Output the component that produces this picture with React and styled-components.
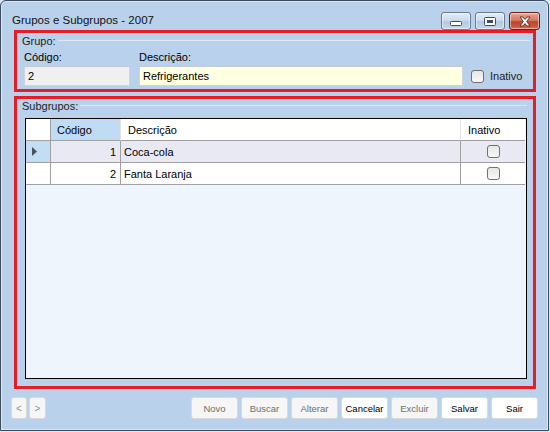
import React from "react"
import styled, { createGlobalStyle } from "styled-components"

const GlobalStyle = createGlobalStyle`
  html, body {
    margin: 0;
    padding: 0;
    background: #dce8f4;
  }
  * {
    box-sizing: border-box;
  }
`

const Window = styled.div`
  width: 549px;
  height: 431px;
  border: 1px solid #3d4b5a;
  border-radius: 6px 6px 0 0;
  background: #b9d1ea;
  box-shadow: inset 0 0 0 1px rgba(255, 255, 255, 0.45);
  display: flex;
  flex-direction: column;
  font-family: "Liberation Sans", Arial, sans-serif;
  font-size: 11px;
  color: #000;
  overflow: hidden;
`

const TitleBar = styled.div`
  height: 29px;
  flex-shrink: 0;
  display: flex;
  align-items: flex-start;
  padding: 0 8px 0 11px;
`

const Title = styled.div`
  flex: 1;
  font-size: 11.5px;
  padding-top: 13px;
  color: #111;
`

const Caption = styled.div`
  display: flex;
  gap: 4px;
  padding-top: 11px;
`

const CaptionButton = styled.div`
  width: ${(p) => (p.$close ? 31 : 30)}px;
  height: 18px;
  border-radius: 3px;
  border: 1px solid ${(p) => (p.$close ? "#5e2118" : "#6a7b90")};
  background: ${(p) =>
    p.$close
      ? "linear-gradient(#e7a595 0%, #d77a62 45%, #c0422a 55%, #d0664b 100%)"
      : "linear-gradient(#e4edf7 0%, #cddcee 45%, #b4c9e2 55%, #c6d8ec 100%)"};
  box-shadow: inset 0 0 0 1px rgba(255, 255, 255, 0.5);
  display: flex;
  align-items: center;
  justify-content: center;
`

const Main = styled.div`
  flex-shrink: 0;
  display: flex;
  flex-direction: column;
  padding: 0 12px 0 13px;
`

const RedBox = styled.div`
  border: 3px solid #e41e26;
  height: ${(p) => p.$h}px;
  margin-top: ${(p) => p.$mt || 0}px;
  display: flex;
  flex-direction: column;
`

const GroupBox = styled.div`
  flex: 1;
  display: flex;
  flex-direction: column;
  padding: ${(p) => p.$pad};
`

const Legend = styled.div`
  display: flex;
  align-items: center;
  height: 13px;
  gap: 2px;
  color: #1e1e1e;

  &::after {
    content: "";
    flex: 1;
    height: 1px;
    background: #dfe9f4;
  }
`

const Fields = styled.div`
  display: flex;
  align-items: flex-end;
  margin: 4px 0 0 2px;
`

const Field = styled.div`
  display: flex;
  flex-direction: column;
  width: ${(p) => p.$w}px;
  margin-right: ${(p) => p.$mr || 0}px;
`

const Label = styled.div`
  height: 13px;
  line-height: 13px;
  margin-bottom: 2px;
`

const Input = styled.div`
  height: 20px;
  line-height: 18px;
  padding: 0 3px;
  border: 1px solid #cfd5dc;
  border-top-color: #c3c9d0;
  background: ${(p) => p.$bg};
`

const Check = styled.div`
  width: 13px;
  height: 13px;
  border: 1px solid #707070;
  border-radius: 3px;
  background: linear-gradient(#e6e6e6, #f8f8f8);
  flex-shrink: 0;
`

const CheckLabel = styled.label`
  display: flex;
  align-items: center;
  gap: 6px;
  height: 20px;
  margin-left: 2px;
  color: #1e1e1e;
`

const Grid = styled.div`
  flex: 1;
  margin: 6px 0 0 3px;
  border: 1px solid #000;
  background: #eef5fc;
`

const Row = styled.div`
  display: grid;
  grid-template-columns: 25px 70px 340px 64px;
  height: 22px;
`

const Cell = styled.div`
  border-right: 1px solid ${(p) => (p.$head && !p.$corner ? "#e4e4e4" : "#a0a0a0")};
  border-bottom: 1px solid #a0a0a0;
  background: ${(p) => p.$bg || "#fff"};
  display: flex;
  align-items: center;
  justify-content: ${(p) => p.$align || "flex-start"};
  padding: ${(p) => p.$pad || "0"};
  white-space: nowrap;
  overflow: hidden;

  &:last-child {
    border-right: none;
  }
`

const Footer = styled.div`
  flex: 1;
  display: flex;
  justify-content: space-between;
  align-items: flex-start;
  padding: 8px 10px 0 10px;
`

const ButtonGroup = styled.div`
  display: flex;
  gap: ${(p) => p.$gap}px;
`

const Button = styled.div`
  width: ${(p) => p.$w || 47}px;
  height: 22px;
  border: 1px solid #dadada;
  border-radius: 3px;
  background: ${(p) => (p.$disabled ? "#f6f6f6" : "#fff")};
  color: ${(p) => (p.$disabled ? "#6f6f6f" : "#000")};
  font-size: 9.5px;
  display: flex;
  align-items: center;
  justify-content: center;
`

const NavGlyph = styled.span`
  color: #8b93a6;
  font-size: 10px;
`

const rows = [
  { id: 1, name: "Coca-cola", current: true },
  { id: 2, name: "Fanta Laranja" },
]

function MinIcon() {
  return (
    <svg width="12" height="6" viewBox="0 0 12 6" style={{ marginTop: 6 }}>
      <rect x="0.5" y="0.5" width="11" height="4" rx="1" fill="#fff" stroke="#3e4c5e" />
    </svg>
  )
}

function RestoreIcon() {
  return (
    <svg width="12" height="9" viewBox="0 0 12 9">
      <rect x="0.5" y="0.5" width="11" height="8" rx="1" fill="#fff" stroke="#3e4c5e" />
      <rect x="3" y="3" width="6" height="3" fill="#3e4c5e" />
    </svg>
  )
}

function CloseIcon() {
  return (
    <svg width="14" height="11" viewBox="0 0 14 11">
      <path
        d="M2 1 L5 1 L7 3.5 L9 1 L12 1 L8.7 5.5 L12 10 L9 10 L7 7.5 L5 10 L2 10 L5.3 5.5 Z"
        fill="#fff"
        stroke="#4a1a12"
        strokeWidth="0.8"
      />
    </svg>
  )
}

function RowArrow() {
  return (
    <svg width="6" height="9" viewBox="0 0 6 9">
      <path d="M0 0 L5 4.5 L0 9 Z" fill="#505050" />
    </svg>
  )
}

export default function App() {
  return (
    <>
      <GlobalStyle />
      <Window>
        <TitleBar>
          <Title>Grupos e Subgrupos - 2007</Title>
          <Caption>
            <CaptionButton><MinIcon /></CaptionButton>
            <CaptionButton><RestoreIcon /></CaptionButton>
            <CaptionButton $close><CloseIcon /></CaptionButton>
          </Caption>
        </TitleBar>

        <Main>
          <RedBox $h={62}>
            <GroupBox $pad="1px 3px 0 5px">
              <Legend>Grupo:</Legend>
              <Fields>
                <Field $w={106} $mr={9}>
                  <Label>Código:</Label>
                  <Input $bg="#f0f0f0">2</Input>
                </Field>
                <Field $w={324} $mr={6}>
                  <Label>Descrição:</Label>
                  <Input $bg="#ffffe1">Refrigerantes</Input>
                </Field>
                <CheckLabel>
                  <Check />
                  Inativo
                </CheckLabel>
              </Fields>
            </GroupBox>
          </RedBox>

          <RedBox $h={293} $mt={4}>
            <GroupBox $pad="0 6px 7px 5px">
              <Legend>Subgrupos:</Legend>
              <Grid>
                <Row>
                  <Cell $head $corner />
                  <Cell $head $bg="#bfdcf4" $pad="0 0 0 6px">Código</Cell>
                  <Cell $head $pad="0 0 0 7px">Descrição</Cell>
                  <Cell $head $pad="0 0 0 7px">Inativo</Cell>
                </Row>
                {rows.map((r) => (
                  <Row key={r.id}>
                    <Cell
                      $bg={r.current ? "#c3ddf3" : "#fff"}
                      $pad="0 0 0 6px"
                    >
                      {r.current && <RowArrow />}
                    </Cell>
                    <Cell
                      $bg={r.current ? "#e9e9f3" : "#fff"}
                      $align="flex-end"
                      $pad="0 4px 0 0"
                    >
                      {r.id}
                    </Cell>
                    <Cell $bg={r.current ? "#e9e9f3" : "#fff"} $pad="0 0 0 3px">
                      {r.name}
                    </Cell>
                    <Cell $bg={r.current ? "#e9e9f3" : "#fff"} $align="center">
                      <Check />
                    </Cell>
                  </Row>
                ))}
              </Grid>
            </GroupBox>
          </RedBox>
        </Main>

        <Footer>
          <ButtonGroup $gap={2}>
            <Button $w={16} $disabled><NavGlyph>&lt;</NavGlyph></Button>
            <Button $w={17} $disabled><NavGlyph>&gt;</NavGlyph></Button>
          </ButtonGroup>
          <ButtonGroup $gap={3}>
            <Button $disabled>Novo</Button>
            <Button $disabled>Buscar</Button>
            <Button $disabled>Alterar</Button>
            <Button>Cancelar</Button>
            <Button $disabled>Excluir</Button>
            <Button>Salvar</Button>
            <Button>Sair</Button>
          </ButtonGroup>
        </Footer>
      </Window>
    </>
  )
}
